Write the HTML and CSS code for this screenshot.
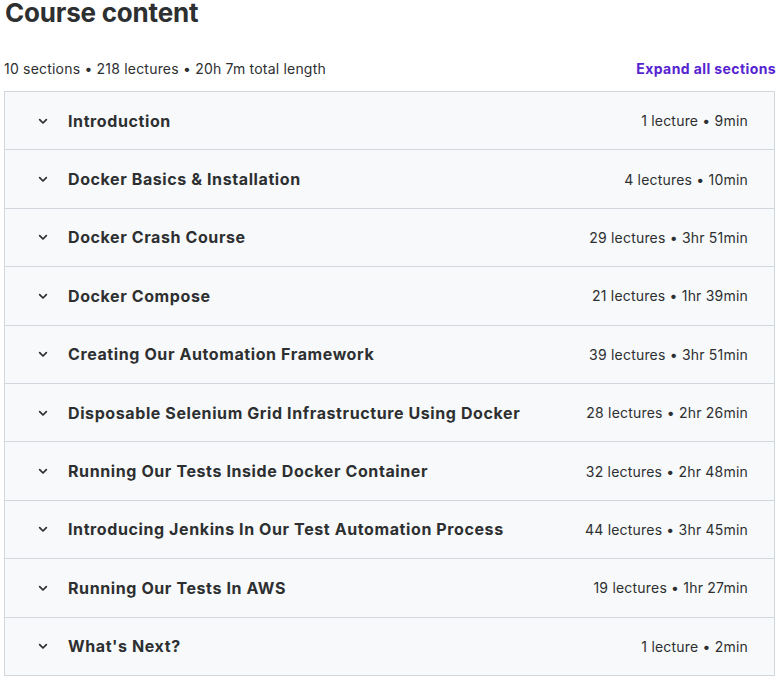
FILE: index.html
```html
<!DOCTYPE html>
<html lang="en">
<head>
  <meta charset="UTF-8" />
  <meta name="viewport" content="width=device-width, initial-scale=1.0" />
  <title>Course content</title>
  <link rel="stylesheet" href="styles.css">
</head>
<body>
  <div class="curriculum">
    <h2 class="heading">Course content</h2>
    <div class="summary">
      <span class="stats">10 sections • 218 lectures • 20h 7m total length</span>
      <button class="expand-all">Expand all sections</button>
    </div>

    <div class="sections">
      <div class="section">
        <span class="chevron"><svg viewBox="0 0 24 24"><path d="M7 10l5 5 5-5"/></svg></span>
        <span class="section-title">Introduction</span>
        <span class="section-meta">1 lecture • 9min</span>
      </div>
      <div class="section">
        <span class="chevron"><svg viewBox="0 0 24 24"><path d="M7 10l5 5 5-5"/></svg></span>
        <span class="section-title">Docker Basics &amp; Installation</span>
        <span class="section-meta">4 lectures • 10min</span>
      </div>
      <div class="section">
        <span class="chevron"><svg viewBox="0 0 24 24"><path d="M7 10l5 5 5-5"/></svg></span>
        <span class="section-title">Docker Crash Course</span>
        <span class="section-meta">29 lectures • 3hr 51min</span>
      </div>
      <div class="section">
        <span class="chevron"><svg viewBox="0 0 24 24"><path d="M7 10l5 5 5-5"/></svg></span>
        <span class="section-title">Docker Compose</span>
        <span class="section-meta">21 lectures • 1hr 39min</span>
      </div>
      <div class="section">
        <span class="chevron"><svg viewBox="0 0 24 24"><path d="M7 10l5 5 5-5"/></svg></span>
        <span class="section-title">Creating Our Automation Framework</span>
        <span class="section-meta">39 lectures • 3hr 51min</span>
      </div>
      <div class="section">
        <span class="chevron"><svg viewBox="0 0 24 24"><path d="M7 10l5 5 5-5"/></svg></span>
        <span class="section-title">Disposable Selenium Grid Infrastructure Using Docker</span>
        <span class="section-meta">28 lectures • 2hr 26min</span>
      </div>
      <div class="section">
        <span class="chevron"><svg viewBox="0 0 24 24"><path d="M7 10l5 5 5-5"/></svg></span>
        <span class="section-title">Running Our Tests Inside Docker Container</span>
        <span class="section-meta">32 lectures • 2hr 48min</span>
      </div>
      <div class="section">
        <span class="chevron"><svg viewBox="0 0 24 24"><path d="M7 10l5 5 5-5"/></svg></span>
        <span class="section-title">Introducing Jenkins In Our Test Automation Process</span>
        <span class="section-meta">44 lectures • 3hr 45min</span>
      </div>
      <div class="section">
        <span class="chevron"><svg viewBox="0 0 24 24"><path d="M7 10l5 5 5-5"/></svg></span>
        <span class="section-title">Running Our Tests In AWS</span>
        <span class="section-meta">19 lectures • 1hr 27min</span>
      </div>
      <div class="section">
        <span class="chevron"><svg viewBox="0 0 24 24"><path d="M7 10l5 5 5-5"/></svg></span>
        <span class="section-title">What's Next?</span>
        <span class="section-meta">1 lecture • 2min</span>
      </div>
    </div>
  </div>
</body>
</html>
```

FILE: styles.css
```css
body {
  font-family: Inter, "Noto Sans", sans-serif;
  color: #2d2f31;
  background: #fff;
  margin: 0;
}

.curriculum {
  padding: 0 4px 0 4px;
}

.heading {
  font-size: 26px;
  font-weight: 700;
  letter-spacing: -0.2px;
  line-height: 32px;
  margin: -3px 0 0 1px;
}

.summary {
  display: flex;
  justify-content: space-between;
  align-items: center;
  height: 24px;
  margin: 27px 0 11px 0;
}

.stats {
  font-size: 14px;
  letter-spacing: 0.2px;
  color: #2d2f31;
}

.expand-all {
  background: none;
  border: none;
  padding: 0;
  font-family: inherit;
  font-size: 14px;
  font-weight: 700;
  letter-spacing: 0.4px;
  color: #5624d0;
  cursor: pointer;
}

.sections {
  border: 1px solid #d1d7dc;
  border-bottom: none;
  width: 769px;
}

.section {
  display: flex;
  align-items: center;
  height: 57.4px;
  padding: 0 26px 0 30px;
  background: #f7f9fa;
  border-bottom: 1px solid #d1d7dc;
}

.chevron {
  width: 16px;
  height: 16px;
  margin-right: 17px;
  display: flex;
}

.chevron svg {
  width: 16px;
  height: 16px;
  fill: none;
  stroke: #2d2f31;
  stroke-width: 2.6;
  stroke-linecap: round;
  stroke-linejoin: round;
}

.section-title {
  flex: 1;
  font-size: 16px;
  font-weight: 700;
  letter-spacing: 0.6px;
}

.section-meta {
  font-size: 14px;
  letter-spacing: 0.2px;
  color: #2d2f31;
}
```
